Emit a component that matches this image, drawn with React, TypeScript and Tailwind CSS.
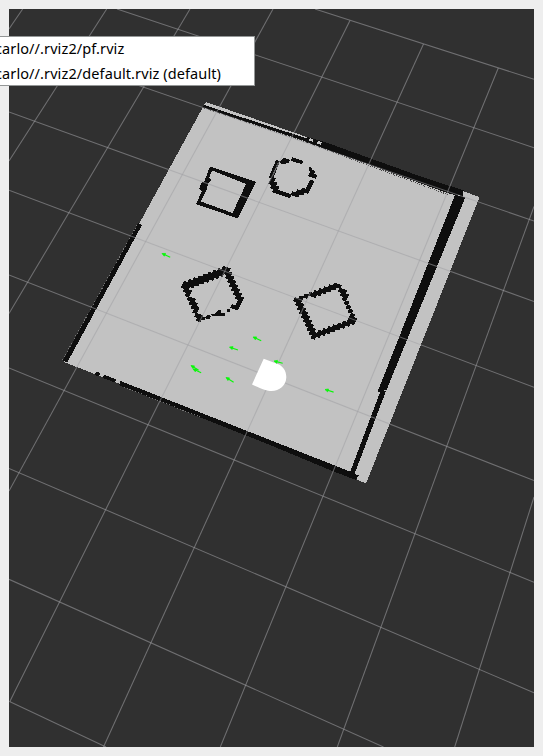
import React from "react";

type Point = [number, number];

const gridLines: number[][] = [
  [315, 9, 534, 79.3],
  [117, 9, 534, 147.7],
  [9, 41, 534, 221],
  [9, 112, 534, 301.5],
  [9, 190.3, 534, 387.3],
  [9, 275, 534, 480.5],
  [9, 368, 534, 582.3],
  [9, 468.5, 534, 692.7],
  [9, 579.3, 383.5, 747],
  [9.5, 701.5, 106, 747],
  [22.7, 9, 9, 29],
  [106.7, 9, 9, 161],
  [190, 9, 9, 313.5],
  [273, 9, 9, 491],
  [350, 20.5, 9.7, 701.7],
  [423.5, 44, 103.5, 747],
  [498.3, 68, 220.3, 747],
  [534, 206.5, 337.3, 747],
  [534, 497, 454.7, 747],
];

// Occupancy cells lie on a skewed lattice that follows the ground plane.
const A: Point = [3.4, 1.15];
const B: Point = [-1.5, 3];
const DET = A[0] * B[1] - A[1] * B[0];

function cells(paths: Point[][]): string {
  const seen = new Map<string, Point>();
  for (const path of paths) {
    for (let n = 0; n + 1 < path.length; n++) {
      const [x1, y1] = path[n];
      const [x2, y2] = path[n + 1];
      const steps = Math.max(1, Math.ceil(Math.hypot(x2 - x1, y2 - y1)));
      for (let s = 0; s <= steps; s++) {
        const x = x1 + ((x2 - x1) * s) / steps;
        const y = y1 + ((y2 - y1) * s) / steps;
        const u = Math.round((x * B[1] - y * B[0]) / DET);
        const v = Math.round((y * A[0] - x * A[1]) / DET);
        seen.set(`${u},${v}`, [u * A[0] + v * B[0], u * A[1] + v * B[1]]);
      }
    }
  }
  return [...seen.values()]
    .map(([x, y]) => {
      const ox = x - 0.3;
      const oy = y - 2.5;
      return `M${ox.toFixed(1)} ${oy.toFixed(1)}l4.3 1.4l-1.8 3.8l-4.3 -1.4z`;
    })
    .join("");
}

const obstacles = cells([
  [[186, 283], [219, 270], [226, 270]],
  [[186, 286], [219, 274]],
  [[184, 284], [187, 295]],
  [[190, 299], [198, 319]],
  [[226, 271], [240, 303], [236, 306]],
  [[237, 302], [234, 307]],
  [[297, 299], [335, 286], [340, 289], [353, 320], [313, 336], [297, 301]],
]);

const ring = cells([
  [[271, 181], [273, 187], [278, 192], [289, 195], [300, 192], [308, 188], [311, 182]],
  [[303, 191], [309, 187]],
  [[311, 177], [312, 173]],
]);

const arrows: [number, number, number][] = [
  [162, 253.5, 24], [253, 337, 24], [229.5, 347, 20], [191, 365.5, 32],
  [193, 369, 25], [226, 377.5, 32], [274, 361, 15], [325, 389.5, 17],
];

function Scene() {
  return (
    <svg className="block h-full w-full" viewBox="9 9 525 738">
      <g shapeRendering="crispEdges">
        <path fill="#c2c2c2" d="M206 102L479.5 197L366 483.5L353 478L270 443L120 384L64 362L139 224L203 107Z" />
        <g fill="#0e0e0e">
          <path d="M204 105L307 138.5L306 141.5L203 107.5Z" />
          <path d="M307 137L322 141L425 178L464 190.5L463 196L450 194L370 165L306 142Z" />
          <path d="M455 195L465.5 197L386.5 390L377.5 392Z" />
          <path d="M380.5 391L386 391L354.5 474L350 472.5Z" />
          <path d="M138 223L142 225L67.5 362L62.5 361Z" />
          <path d="M120.5 381L270 440L350 471.5L358.5 475.5L356 480L330 470L270 445L119 385.3Z" />
          <path d="M96 371.5h3v1h1v2h-1v1h-3v-1h-1v-2h1zM104 374.5L116 379.5L115 382.5L103 378Z" />
          <path d="M210 166.5L256 182L238 218.5L196 204L202 191L199 189L202 182L204 182ZM212 170.5L209 178L211 180L208 184L207 189L201 201.5L232.5 213L246 184Z" fillRule="evenodd" />
          <path d={obstacles} />
          <path d={ring} />
          <path d="M200 317h5v3h-5zM205 317l3 -2l3 1l-1 3l-4 0zM211 314l3 0l4 -4h3v3h4v3h-13zM227 309h3v3h-3zM232 307l5 -2v4h-4zM309 167l3 1l1 3h-4z" />
          <path d="M292 157L303.5 161L302 164L291 161ZM280 161L284 158L290 160L289 163L283 164L281 164ZM276 160L280 161L273 179L268.5 178Z" />
        </g>
        <path d="M204 108L306 142L370 166L449 195" fill="none" stroke="#444" strokeDasharray="1 1" />
        <path d="M278 163L273 175" fill="none" stroke="#555" strokeDasharray="1 1" />
        <path d="M137 225L62 361M124 387L200 417" fill="none" stroke="#777" strokeDasharray="1 2" />
        <path d="M310 138l3.5 1.2l-1 2.5l-3.5 -1.2zM318 141l4 1.3l-1.3 2.5l-4 -1.3zM463 191L471 194L468 198L463 195Z" fill="#c2c2c2" />
      </g>
      <g stroke="#a0a0a4" strokeOpacity=".56" strokeWidth="1.05">
        {gridLines.map(([x1, y1, x2, y2]) => (
          <line key={`${x1}-${y1}`} x1={x1} y1={y1} x2={x2} y2={y2} />
        ))}
      </g>
      <path fill="#fff" d="M263.7 358.8L277 363.7C283 365.7 286.5 371 286.3 377.5C286 385.5 279.5 391 271.5 391C267 391 262 389 252 384.5Z" />
      <g fill="#08f808" stroke="#08f808">
        {arrows.map(([x, y, angle]) => (
          <g key={`${x}-${y}`} transform={`translate(${x} ${y}) rotate(${angle})`}>
            <path d="M0 0L3.2 -1.5V1.5Z" strokeWidth=".7" />
            <path d="M2 0H9" strokeWidth="1.1" />
          </g>
        ))}
      </g>
    </svg>
  );
}

export default function App() {
  return (
    <main className="relative h-[756px] w-[543px] overflow-hidden bg-[#eeeeee] p-[9px]">
      <div className="h-[738px] w-[525px] bg-[#303030]">
        <Scene />
      </div>
      <div className="absolute -left-2 top-9 flex h-[50px] w-[263px] flex-col border border-[#949797] bg-white font-['Noto_Sans','Open_Sans',sans-serif] text-[14.5px] leading-[23px] tracking-[0.1px] whitespace-pre text-black">
        <div className="h-[25px] pl-[2px]">carlo//.rviz2/pf.rviz</div>
        <div className="h-[23px] pl-[2px]">carlo//.rviz2/default.rviz (default)</div>
      </div>
    </main>
  );
}
